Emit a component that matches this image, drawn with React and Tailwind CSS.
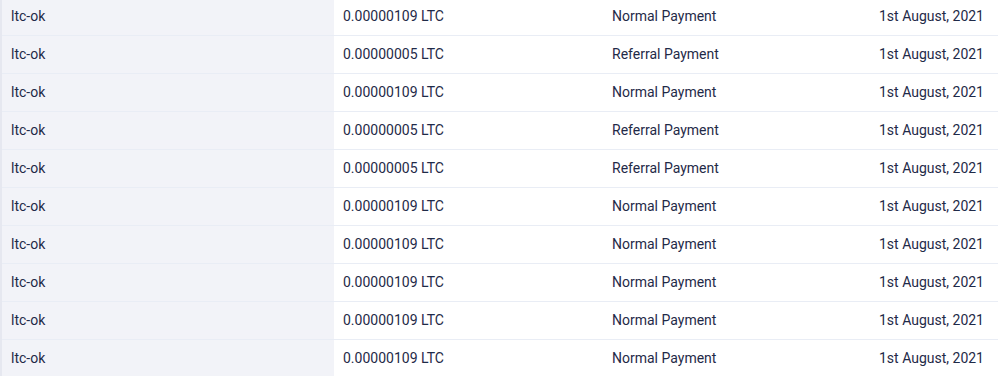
import React from "react";

const rows = [
  { name: "ltc-ok", amount: "0.00000109 LTC", type: "Normal Payment" },
  { name: "ltc-ok", amount: "0.00000005 LTC", type: "Referral Payment" },
  { name: "ltc-ok", amount: "0.00000109 LTC", type: "Normal Payment" },
  { name: "ltc-ok", amount: "0.00000005 LTC", type: "Referral Payment" },
  { name: "ltc-ok", amount: "0.00000005 LTC", type: "Referral Payment" },
  { name: "ltc-ok", amount: "0.00000109 LTC", type: "Normal Payment" },
  { name: "ltc-ok", amount: "0.00000109 LTC", type: "Normal Payment" },
  { name: "ltc-ok", amount: "0.00000109 LTC", type: "Normal Payment" },
  { name: "ltc-ok", amount: "0.00000109 LTC", type: "Normal Payment" },
  { name: "ltc-ok", amount: "0.00000109 LTC", type: "Normal Payment" },
];

const App = () => {
  return (
    <div
      className="w-[998px] h-[376px] overflow-hidden bg-white text-[14px] text-[#1f2a48]"
      style={{ fontFamily: "Roboto, 'Liberation Sans', sans-serif" }}
    >
      <div className="-mt-[2px] border-l-2 border-[#e6e8f0]">
        {rows.map((row, i) => (
          <div
            key={i}
            className="grid grid-cols-[332px_268px_1fr_auto] h-[38px] border-b border-[#e9edf5]"
          >
            <div className="flex items-center pl-[9px] bg-[#f2f3f8]">{row.name}</div>
            <div className="flex items-center pl-[9px]">{row.amount}</div>
            <div className="flex items-center pl-[10px]">{row.type}</div>
            <div className="flex items-center justify-end pr-[14px]">1st August, 2021</div>
          </div>
        ))}
      </div>
    </div>
  );
};

export default App;
